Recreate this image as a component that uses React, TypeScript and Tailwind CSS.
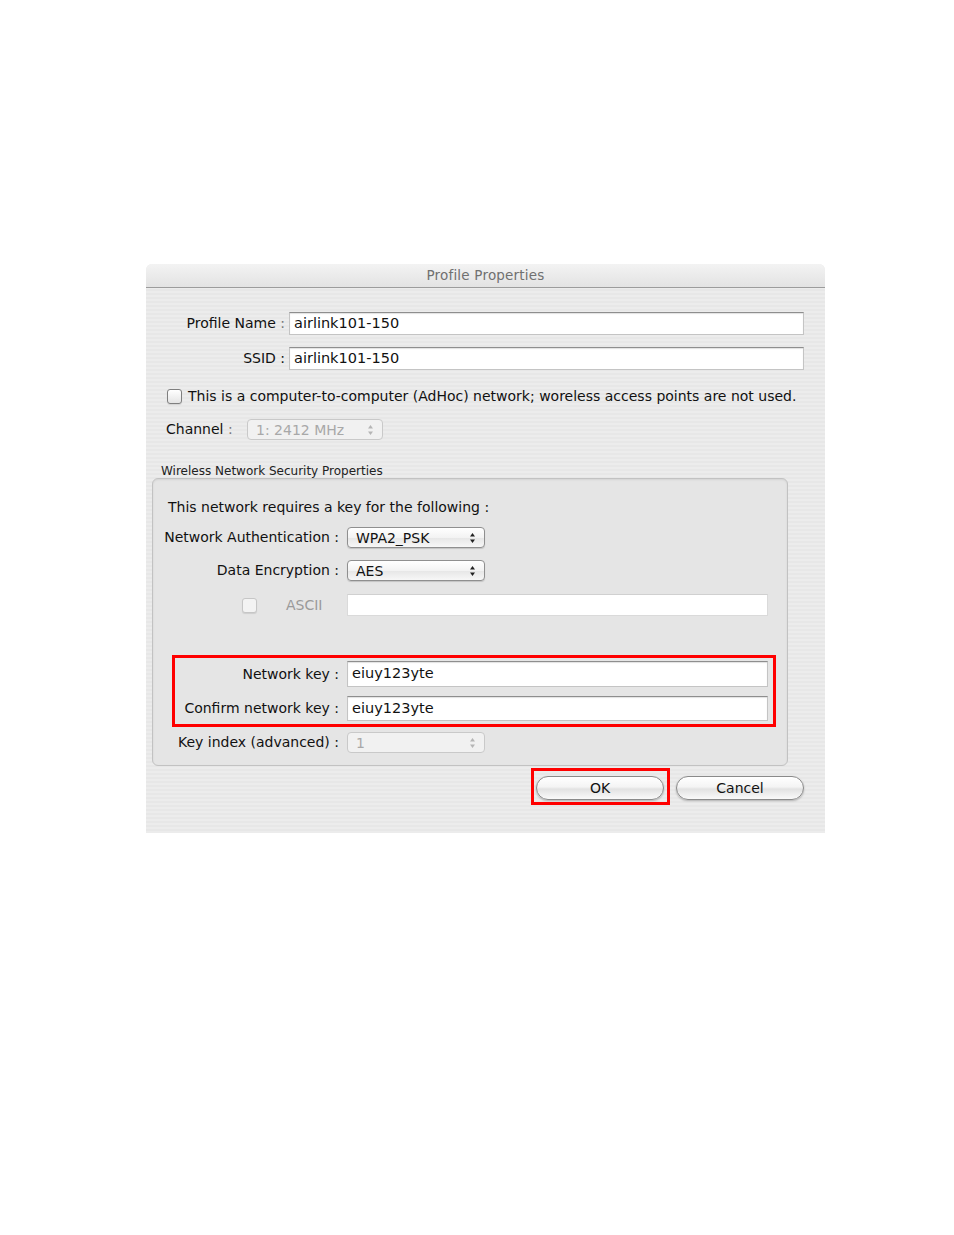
import React from 'react';

const font = "font-['DejaVu_Sans',sans-serif]";

function TextField({ value, className = '' }: { value?: string; className?: string }) {
  return (
    <div
      className={`flex items-center bg-white border border-[#c4c4c4] border-t-[#8e8e8e] shadow-[inset_0_1px_1px_rgba(0,0,0,0.12)] pl-[4px] text-[14.5px] text-[#111] ${className}`}
    >
      {value}
    </div>
  );
}

function Arrows({ disabled }: { disabled?: boolean }) {
  const c = disabled ? '#b5b5b5' : '#222';
  return (
    <svg width="7" height="12" viewBox="0 0 7 12">
      <path d="M3.5 1 L6 4.5 L1 4.5 Z" fill={c} />
      <path d="M3.5 11 L6 7.5 L1 7.5 Z" fill={c} />
    </svg>
  );
}

function Popup({ value, width, disabled }: { value: string; width: string; disabled?: boolean }) {
  return (
    <div
      className={`flex items-center h-[21px] ${width} rounded-[4px] border ${
        disabled
          ? 'border-[#c9c9c9] bg-[#f1f1f1] text-[#a8a8a8]'
          : 'border-[#8f8f8f] bg-[linear-gradient(#ffffff,#f3f3f3_50%,#e6e6e6_51%,#f7f7f7)] text-[#111] shadow-[0_1px_1px_rgba(0,0,0,0.15)]'
      } text-[14px]`}
    >
      <span className="flex-1 pl-[8px] leading-none">{value}</span>
      <span className="flex items-center justify-center w-[24px] h-full">
        <Arrows disabled={disabled} />
      </span>
    </div>
  );
}

function Checkbox({ disabled }: { disabled?: boolean }) {
  return (
    <div
      className={`w-[15px] h-[15px] rounded-[3px] border ${
        disabled ? 'border-[#c6c6c6] bg-[#f3f3f3]' : 'border-[#7f7f7f] bg-[linear-gradient(#ffffff,#e4e4e4)]'
      } shadow-[0_1px_1px_rgba(0,0,0,0.1)]`}
    />
  );
}

function AquaButton({ label }: { label: string }) {
  return (
    <div className="flex items-center justify-center w-[128px] h-[24px] rounded-full border border-[#8a8a8a] bg-[linear-gradient(#ffffff,#f4f4f4_45%,#e2e2e2_55%,#fafafa)] shadow-[0_1px_2px_rgba(0,0,0,0.25)] text-[14px] text-[#111]">
      {label}
    </div>
  );
}

export default function App() {
  return (
    <div className={`min-h-[1235px] w-[954px] bg-white pt-[264px] pl-[146px] ${font}`}>
      <div className="relative w-[679px] h-[569px] rounded-t-[6px] bg-[repeating-linear-gradient(0deg,#ececec_0px,#ececec_2px,#e7e7e7_2px,#e7e7e7_4px)] flex flex-col">
        {/* Title bar */}
        <div className="h-[24px] rounded-t-[6px] border-b border-[#9c9c9c] bg-[linear-gradient(#f3f3f3,#e3e3e3)] flex items-center justify-center text-[13.5px] text-[#707070] tracking-[0.2px]">
          Profile Properties
        </div>

        {/* Profile name / SSID */}
        <div className="flex items-center mt-[24px]">
          <div className="w-[143px] pr-[4px] text-right text-[14px] text-[#111]">
            Profile Name <span className="text-[#777]">:</span>
          </div>
          <TextField value="airlink101-150" className="w-[515px] h-[23px]" />
        </div>
        <div className="flex items-center mt-[12px]">
          <div className="w-[143px] pr-[4px] text-right text-[14px] text-[#111]">SSID :</div>
          <TextField value="airlink101-150" className="w-[515px] h-[23px]" />
        </div>

        {/* AdHoc */}
        <div className="flex items-center mt-[16px] pl-[21px] gap-[6px] text-[14px] text-[#111]">
          <Checkbox />
          <span>This is a computer-to-computer (AdHoc) network; woreless access points are not used.</span>
        </div>

        {/* Channel */}
        <div className="flex items-center mt-[12px] pl-[20px] text-[14px] text-[#111]">
          <span className="w-[81px]">
            Channel <span className="text-[#777]">:</span>
          </span>
          <Popup value="1: 2412 MHz" width="w-[136px]" disabled />
        </div>

        {/* Security group */}
        <div className="mt-[22px] pl-[15px] text-[12px] text-[#222]">Wireless Network Security Properties</div>
        <div className="mt-[-2px] ml-[6px] w-[636px] h-[288px] rounded-[6px] border border-[#c2c2c2] bg-[#e5e5e5] shadow-[inset_0_1px_2px_rgba(0,0,0,0.08)] flex flex-col">
          <div className="mt-[18px] pl-[15px] text-[14px] text-[#111]">This network requires a key for the following :</div>

          <div className="flex items-center mt-[9px]">
            <div className="w-[194px] text-right pr-[8px] text-[14px] text-[#111]">Network Authentication :</div>
            <Popup value="WPA2_PSK" width="w-[138px]" />
          </div>
          <div className="flex items-center mt-[12px]">
            <div className="w-[194px] text-right pr-[8px] text-[14px] text-[#111]">Data Encryption :</div>
            <Popup value="AES" width="w-[138px]" />
          </div>

          <div className="flex items-center mt-[13px]">
            <div className="w-[194px] flex items-center">
              <div className="ml-[89px]">
                <Checkbox disabled />
              </div>
              <span className="ml-[29px] text-[14px] text-[#9a9a9a]">ASCII</span>
            </div>
            <TextField className="w-[421px] h-[22px] border-[#dadada] border-t-[#d0d0d0] shadow-none" />
          </div>

          <div className="flex items-center mt-[45px]">
            <div className="w-[194px] text-right pr-[8px] text-[14px] text-[#111]">Network key :</div>
            <TextField value="eiuy123yte" className="w-[421px] h-[26px]" />
          </div>
          <div className="flex items-center mt-[9px]">
            <div className="w-[194px] text-right pr-[8px] text-[14px] text-[#111]">Confirm network key :</div>
            <TextField value="eiuy123yte" className="w-[421px] h-[25px]" />
          </div>
          <div className="flex items-center mt-[11px]">
            <div className="w-[194px] text-right pr-[8px] text-[14px] text-[#111]">Key index (advanced) :</div>
            <Popup value="1" width="w-[138px]" disabled />
          </div>
        </div>

        {/* Buttons */}
        <div className="flex justify-end gap-[12px] mt-[10px] pr-[21px]">
          <AquaButton label="OK" />
          <AquaButton label="Cancel" />
        </div>

        {/* Red annotation boxes */}
        <div className="absolute left-[26px] top-[391px] w-[604px] h-[72px] border-[3px] border-[#ff0000]" />
        <div className="absolute left-[385px] top-[504px] w-[139px] h-[37px] border-[3px] border-[#ff0000]" />
      </div>
    </div>
  );
}
